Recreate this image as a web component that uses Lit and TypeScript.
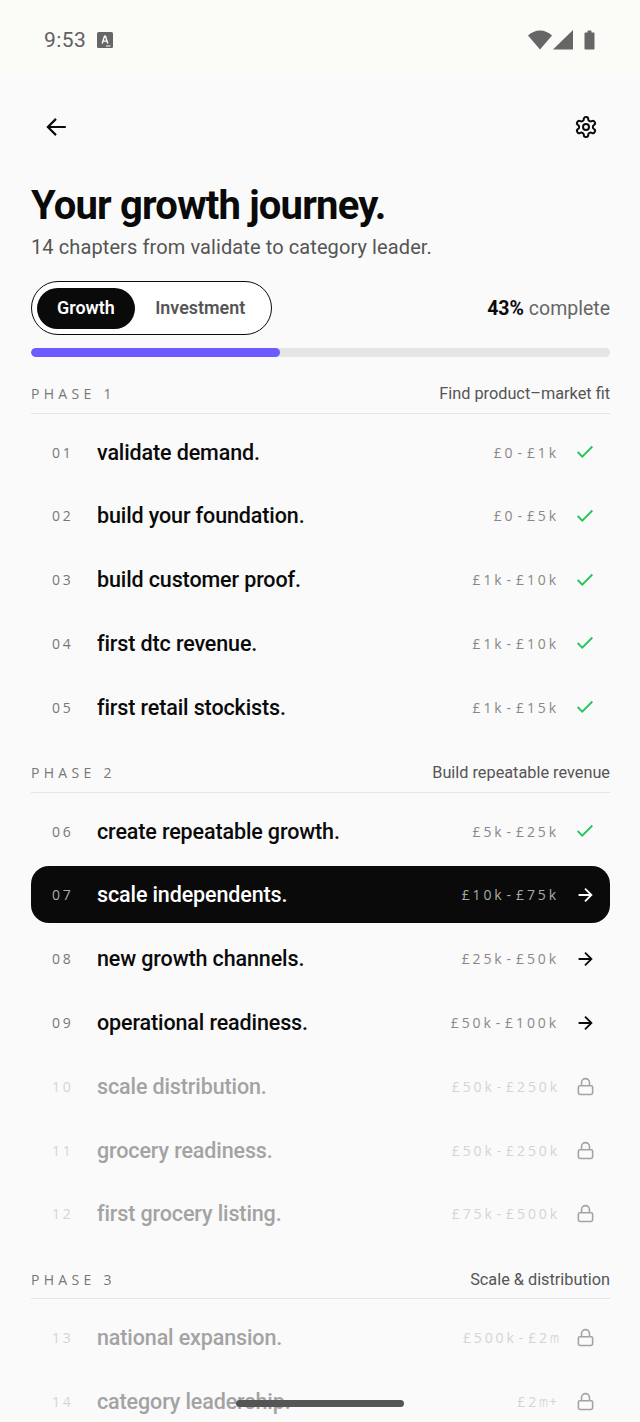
import { LitElement, html, css, svg } from 'lit';
import { customElement } from 'lit/decorators.js';

type Status = 'done' | 'open' | 'locked';
interface Chapter { num: string; title: string; range: string; status: Status; active?: boolean }
interface Phase { label: string; goal: string; chapters: Chapter[] }

const PHASES: Phase[] = [
  {
    label: 'PHASE 1',
    goal: 'Find product–market fit',
    chapters: [
      { num: '01', title: 'validate demand.', range: '£0-£1k', status: 'done' },
      { num: '02', title: 'build your foundation.', range: '£0-£5k', status: 'done' },
      { num: '03', title: 'build customer proof.', range: '£1k-£10k', status: 'done' },
      { num: '04', title: 'first dtc revenue.', range: '£1k-£10k', status: 'done' },
      { num: '05', title: 'first retail stockists.', range: '£1k-£15k', status: 'done' },
    ],
  },
  {
    label: 'PHASE 2',
    goal: 'Build repeatable revenue',
    chapters: [
      { num: '06', title: 'create repeatable growth.', range: '£5k-£25k', status: 'done' },
      { num: '07', title: 'scale independents.', range: '£10k-£75k', status: 'open', active: true },
      { num: '08', title: 'new growth channels.', range: '£25k-£50k', status: 'open' },
      { num: '09', title: 'operational readiness.', range: '£50k-£100k', status: 'open' },
      { num: '10', title: 'scale distribution.', range: '£50k-£250k', status: 'locked' },
      { num: '11', title: 'grocery readiness.', range: '£50k-£250k', status: 'locked' },
      { num: '12', title: 'first grocery listing.', range: '£75k-£500k', status: 'locked' },
    ],
  },
  {
    label: 'PHASE 3',
    goal: 'Scale & distribution',
    chapters: [
      { num: '13', title: 'national expansion.', range: '£500k-£2m', status: 'locked' },
      { num: '14', title: 'category leadership.', range: '£2m+', status: 'locked' },
    ],
  },
];

const ICONS = {
  done: svg`<path d="M20 6 9 17l-5-5"/>`,
  open: svg`<path d="M5 12h14M12 5l7 7-7 7"/>`,
  locked: svg`<rect x="3" y="11" width="18" height="11" rx="2"/><path d="M7 11V7a5 5 0 0 1 10 0v4"/>`,
};

@customElement('app-root')
export class AppRoot extends LitElement {
  static styles = css`
    :host {
      display: block;
      position: relative;
      height: 1422px;
      overflow: hidden;
      background: #fafafa;
      font-family: Roboto, sans-serif;
      color: #0a0a0a;
    }

    .status {
      height: 75px;
      background: #fbfcf8;
      display: flex;
      align-items: center;
      justify-content: space-between;
      padding: 4px 45px 0 44px;
      box-sizing: border-box;
      color: #666;
    }
    .status-left { display: flex; align-items: center; gap: 11px; }
    .clock { font-size: 21px; letter-spacing: 0.4px; color: #606060; }
    .status-right { display: flex; align-items: center; gap: 1px; }
    .status svg { display: block; }
    .battery { margin-left: 10px; }

    .content { padding: 0 30px 0 31px; }

    .nav {
      height: 36px;
      margin-top: 34px;
      display: flex;
      align-items: center;
      justify-content: space-between;
      padding: 0 12px;
    }
    .nav svg { display: block; }

    h1 {
      margin: 36px 0 0;
      font-size: 40px;
      line-height: 50px;
      font-weight: 700;
      letter-spacing: -0.8px;
    }
    .sub {
      margin-top: 3px;
      font-size: 20px;
      line-height: 26px;
      letter-spacing: 0.1px;
      color: #555;
    }

    .controls {
      margin-top: 21px;
      display: flex;
      align-items: center;
      justify-content: space-between;
    }
    .toggle {
      box-sizing: border-box;
      width: 240.5px;
      height: 54px;
      padding: 5px;
      border: 1.5px solid #0a0a0a;
      border-radius: 27px;
      background: #fff;
      display: flex;
      align-items: center;
    }
    .tab {
      box-sizing: border-box;
      height: 41px;
      padding-bottom: 1px;
      display: flex;
      align-items: center;
      justify-content: center;
      border-radius: 21px;
      font-size: 17.9px;
      font-weight: 600;
      color: #555;
    }
    .tab.on { width: 98px; background: #0a0a0a; color: #fff; }
    .tab.off { width: 131px; }
    .pct { font-size: 19.5px; color: #666; }
    .pct b { font-weight: 700; color: #0a0a0a; }

    .track {
      margin-top: 13px;
      height: 9px;
      border-radius: 5px;
      background: #e5e5e5;
      overflow: hidden;
    }
    .fill { height: 100%; background: #6c5cff; border-radius: 5px; }

    .phase { margin-top: 18.5px; }
    .phase + .phase { margin-top: 19px; }
    .phase-head {
      display: flex;
      align-items: center;
      justify-content: space-between;
      height: 38px;
      padding-bottom: 1px;
      border-bottom: 1px solid #e5e5e5;
      box-sizing: border-box;
    }
    .phase-label {
      font-family: 'Open Sans', sans-serif;
      font-size: 14px;
      letter-spacing: 4.3px;
      color: #777;
    }
    .phase-goal { font-size: 16.3px; color: #555; }

    .rows {
      display: flex;
      flex-direction: column;
      gap: 6.8px;
      margin-top: 10px;
    }
    .row {
      height: 57px;
      display: flex;
      align-items: center;
      border-radius: 18px;
      padding: 0 14px 0 21px;
      box-sizing: border-box;
    }
    .row.active { background: #0a0a0a; color: #fff; }
    .num {
      width: 45px;
      font-family: 'Open Sans', sans-serif;
      font-size: 14px;
      letter-spacing: 2.7px;
      color: #777;
    }
    .title {
      flex: 1;
      font-size: 21.5px;
      font-weight: 500;
      letter-spacing: -0.12px;
    }
    .range {
      font-family: 'Open Sans', sans-serif;
      font-size: 14px;
      letter-spacing: 2.9px;
      color: #888;
      margin-right: 15px;
      white-space: nowrap;
    }
    /* hyphen and m are wider / narrower than the mono cells in the reference */
    .dash { padding: 0 2px; }
    .m { display: inline-block; width: 10px; transform: scaleX(0.7); transform-origin: left; }
    .icon-box { width: 22px; height: 22px; display: flex; align-items: center; justify-content: center; }
    .icon { display: block; fill: none; stroke: currentColor; stroke-width: 2; }
    .icon.done { width: 22px; height: 22px; color: #22c55e; }
    .icon.open { width: 22px; height: 22px; }
    .icon.locked { width: 19px; height: 19px; }
    .row.active .num, .row.active .range { color: #aaa; }
    .row.locked .title { color: #a3a3a3; }
    .row.locked .num, .row.locked .range { color: #d4d4d4; }
    .row.locked .range { margin-right: 14px; }
    .row.locked .icon { color: #a3a3a3; }

    .home {
      position: absolute;
      left: 236px;
      top: 1400px;
      width: 168px;
      height: 7px;
      border-radius: 4px;
      background: #555;
    }
  `;

  private renderRange(range: string) {
    return [...range].map((ch) => {
      if (ch === '-') return html`<span class="dash">-</span>`;
      if (ch === 'm') return html`<span class="m">m</span>`;
      return ch;
    });
  }

  private renderRow(c: Chapter) {
    const cls = `row ${c.status}${c.active ? ' active' : ''}`;
    return html`
      <div class=${cls}>
        <span class="num">${c.num}</span>
        <span class="title">${c.title}</span>
        <span class="range">${this.renderRange(c.range)}</span>
        <span class="icon-box"><svg class="icon ${c.status}" viewBox="0 0 24 24">${ICONS[c.status]}</svg></span>
      </div>
    `;
  }

  render() {
    return html`
      <div class="status">
        <div class="status-left">
          <span class="clock">9:53</span>
          <svg width="16" height="16" viewBox="0 0 16 16">
            <rect width="16" height="16" rx="1.500" fill="#666"/>
            <path d="M4.500 11.500L7 3.500h2l2.500 8H10L9.500 9.800h-3L6 11.500zM6.900 8.500h2.200L8 5z" fill="#fff"/>
            <rect x="9" y="13.500" width="4.500" height="1" fill="#fff"/>
          </svg>
        </div>
        <div class="status-right">
          <svg width="24" height="20" viewBox="0 0 24 20"><path d="M12 19.500L0 5.500C3 2.500 7.500 .5 12 .5s9 2 12 5z" fill="#666"/></svg>
          <svg width="20" height="20" viewBox="0 0 20 20"><path d="M20 0v19.500H0z" fill="#666"/></svg>
          <svg class="battery" width="11" height="20" viewBox="0 0 11 20"><path d="M3.500 1.500c0-.6.4-1 1-1h2c.6 0 1 .4 1 1v1h2c.6 0 1 .4 1 1V18.500c0 .6-.4 1-1 1h-8c-.6 0-1-.4-1-1V3.500c0-.6.4-1 1-1h2z" fill="#666"/></svg>
        </div>
      </div>
      <div class="content">
        <div class="nav">
          <svg width="26" height="26" viewBox="0 0 24 24"><path d="M21 12H4M12 4.500L4.500 12l7.500 7.500" fill="none" stroke="#0a0a0a" stroke-width="2"/></svg>
          <svg width="24" height="24" viewBox="0 0 24 24" fill="none" stroke="#0a0a0a" stroke-width="2" stroke-linejoin="round">
            <path d="M12.220 2h-.44a2 2 0 0 0-2 2v.18a2 2 0 0 1-1 1.730l-.43.25a2 2 0 0 1-2 0l-.15-.08a2 2 0 0 0-2.730.73l-.22.38a2 2 0 0 0 .73 2.730l.15.1a2 2 0 0 1 1 1.720v.51a2 2 0 0 1-1 1.740l-.15.09a2 2 0 0 0-.73 2.730l.22.38a2 2 0 0 0 2.730.73l.15-.08a2 2 0 0 1 2 0l.43.25a2 2 0 0 1 1 1.730V20a2 2 0 0 0 2 2h.44a2 2 0 0 0 2-2v-.18a2 2 0 0 1 1-1.730l.43-.25a2 2 0 0 1 2 0l.15.08a2 2 0 0 0 2.730-.73l.22-.39a2 2 0 0 0-.73-2.730l-.15-.08a2 2 0 0 1-1-1.740v-.5a2 2 0 0 1 1-1.740l.15-.09a2 2 0 0 0 .73-2.730l-.22-.38a2 2 0 0 0-2.730-.73l-.15.08a2 2 0 0 1-2 0l-.43-.25a2 2 0 0 1-1-1.730V4a2 2 0 0 0-2-2z"/>
            <circle cx="12" cy="12" r="3"/>
          </svg>
        </div>
        <h1>Your growth journey.</h1>
        <div class="sub">14 chapters from validate to category leader.</div>
        <div class="controls">
          <div class="toggle">
            <div class="tab on">Growth</div>
            <div class="tab off">Investment</div>
          </div>
          <div class="pct"><b>43%</b> complete</div>
        </div>
        <div class="track"><div class="fill" style="width: 43%"></div></div>
        ${PHASES.map((p) => html`
          <div class="phase">
            <div class="phase-head">
              <span class="phase-label">${p.label}</span>
              <span class="phase-goal">${p.goal}</span>
            </div>
            <div class="rows">${p.chapters.map((c) => this.renderRow(c))}</div>
          </div>
        `)}
      </div>
      <div class="home"></div>
    `;
  }
}
